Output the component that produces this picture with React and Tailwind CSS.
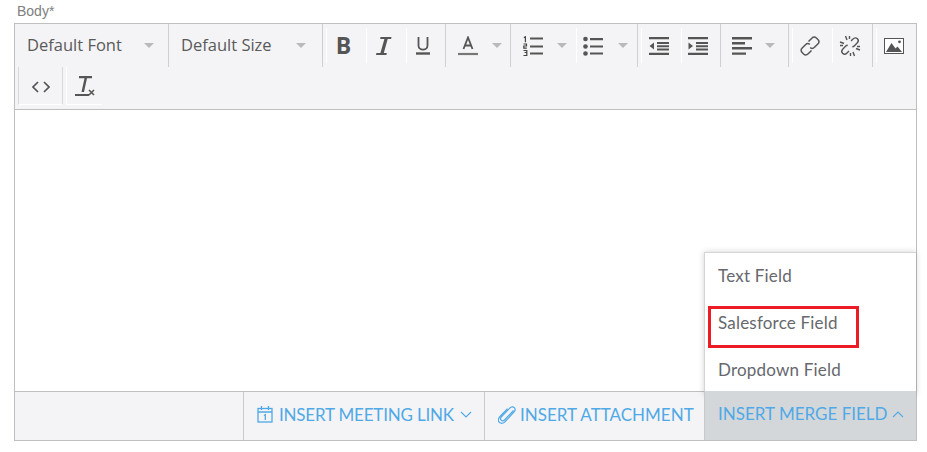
const Caret = () => <span className="ml-auto h-0 w-0 border-x-[5px] border-t-[5px] border-x-transparent border-t-[#b9b9bc]" />;

// toolbar icons, drawn on a 20x20 box
const Bold = () => <span className="font-['Open_Sans',sans-serif] text-[23px] font-bold leading-none text-[#555]">B</span>;
const Italic = () => (
  <svg width="16" height="20" viewBox="0 0 16 20" fill="#555">
    <path d="M4.500 1h11l-.4 2h-3.400L7.800 17h3l-.4 2H0l.4-2h4L8.400 3H4.200z" />
  </svg>
);
const Underline = () => (
  <svg width="14" height="20" viewBox="0 0 14 20" fill="none" stroke="#555">
    <path d="M2.500 1v8.500c0 5.500 9 5.500 9 0V1" strokeWidth="1.800" />
    <path d="M0 17.500h14" strokeWidth="2.400" />
  </svg>
);
const TextColor = () => (
  <svg width="20" height="20" viewBox="0 0 20 20" fill="none" stroke="#555">
    <path d="M5.500 13 10 1.500 14.500 13M7 9.500h6" strokeWidth="1.800" />
    <path d="M0 18h20" stroke="#777" strokeWidth="2.200" />
  </svg>
);
const Ordered = () => (
  <svg width="20" height="20" viewBox="0 0 20 20">
    <path d="M7 2.500h13M7 10.500h13M7 17.500h13" stroke="#555" strokeWidth="2.200" />
    <path d="M.8 1.500 2.400 .8v5.400M.5 8h3v2H.8v2.200h3M.5 14.500h3.300v2H1.500h2.300v3H.5" stroke="#444" fill="none" strokeWidth="1.200" />
  </svg>
);
const Bullets = () => (
  <svg width="20" height="20" viewBox="0 0 20 20" fill="#555">
    <circle cx="2.500" cy="3" r="2.300" />
    <circle cx="2.500" cy="10.500" r="2.300" />
    <circle cx="2.500" cy="17.500" r="2.300" />
    <path d="M7 2h13v2.200H7zM7 9.400h13v2.200H7zM7 16.400h13v2.200H7z" />
  </svg>
);
const Outdent = () => (
  <svg width="20" height="18" viewBox="0 0 20 18" fill="#555">
    <path d="M0 0h20v2.200H0zM8 5h12v2H8zM8 8.200h12v2H8zM8 11.400h12v2H8zM0 15.800h20V18H0zM5 5.500v7L.5 9z" />
  </svg>
);
const Indent = () => (
  <svg width="20" height="18" viewBox="0 0 20 18" fill="#555">
    <path d="M0 0h20v2.200H0zM8 5h12v2H8zM8 8.200h12v2H8zM8 11.400h12v2H8zM0 15.800h20V18H0zM.5 5.500v7L5 9z" />
  </svg>
);
const AlignLeft = () => (
  <svg width="20" height="18" viewBox="0 0 20 18" fill="#555">
    <path d="M0 0h20v2.400H0zM0 5h13v2.400H0zM0 10h20v2.400H0zM0 15.400h14v2.400H0z" />
  </svg>
);
const Link = () => (
  <svg width="20" height="20" viewBox="0 0 20 20" fill="none" stroke="#555" strokeWidth="1.500">
    <path d="M8.500 5.500 11.800 2.200c1.500-1.500 3.200-1.500 4.600-.2l1.500 1.500c1.400 1.400 1.300 3.100-.1 4.500L14.500 11.300c-1.400 1.400-3 1.400-4.300.2" />
    <path d="M11.500 14.500 8.200 17.800c-1.500 1.500-3.200 1.500-4.600.2l-1.500-1.500C.7 15.100.8 13.400 2.200 12L5.500 8.700c1.400-1.400 3-1.400 4.300-.2" />
  </svg>
);
const Unlink = () => (
  <svg width="22" height="22" viewBox="0 0 22 22" fill="none" stroke="#555" strokeWidth="1.400">
    <path d="M12 6l2-2c1.500-1.500 3.200-1.500 4.400-.3s1.200 2.900-.3 4.400l-2.600 2.600c-.8.800-1.500 1-2.200 1" />
    <path d="M10 16l-2 2c-1.500 1.500-3.200 1.500-4.400.3s-1.200-2.900.3-4.400l2.600-2.600c.8-.8 1.500-1 2.200-1" />
    <path d="M6.500 1l1.500 4M10.500 1v3M1 7l4 1.500M1 10.500h3M15.500 21L14 17M11.500 21v-3M21 15l-4-1.500M21 11.500h-3" />
  </svg>
);
const ImageIcon = () => (
  <svg width="20" height="16" viewBox="0 0 20 16">
    <rect x=".5" y=".5" width="19" height="15" fill="#fff" stroke="#555" />
    <path d="M2 14 7.500 5l4 5.500 2-2 4.500 5.500z" fill="#555" />
    <circle cx="15.500" cy="3.800" r="1.400" fill="#555" />
  </svg>
);
const Code = () => (
  <svg width="18" height="12" viewBox="0 0 18 12" fill="none" stroke="#555" strokeWidth="1.700">
    <path d="M6 1 1 6l5 5M12 1l5 5-5 5" />
  </svg>
);
const ClearFormat = () => (
  <svg width="20" height="22" viewBox="0 0 20 22" fill="#555">
    <path d="M4 1h13v2.200h-5L9 17H6.500L9.500 3.200H4z" />
    <path d="M0 19h14v2H0z" />
    <path d="m14 15 5 5M19 15l-5 5" stroke="#555" strokeWidth="1.600" />
  </svg>
);
const Calendar = () => (
  <svg width="16" height="17" viewBox="0 0 16 17" fill="none" stroke="#4fa9e6" strokeWidth="1.300">
    <rect x="1" y="2.500" width="14" height="13.500" />
    <path d="M1 6h14M4.500 0v4M11.500 0v4M7 9.500l1.300-.8V14" />
  </svg>
);
const Clip = () => (
  <svg width="18" height="19" viewBox="0 0 18 19" fill="none" stroke="#4fa9e6" strokeWidth="1.200">
    <path d="M15.500 5.500 6.500 15c-1 1-2.500 1-3.300.2s-.8-2.300.2-3.300l8.400-8.800c1.500-1.600 3.400-1.600 4.500-.5s1.100 3-.4 4.600L7.200 16.600c-2 2.100-4.400 2.100-5.800.7s-1.300-3.800.6-5.800L9.500 3.700" />
  </svg>
);
const Chevron = ({ up }) => (
  <svg width="12" height="7" viewBox="0 0 12 7" fill="none" stroke="#4fa9e6" strokeWidth="1.100">
    <path d={up ? 'M1 6l5-5 5 5' : 'M1 1l5 5 5-5'} />
  </svg>
);

// one formatting button with the white hairline on its left
const Btn = ({ children, className = 'w-10' }) => (
  <div className={`flex h-[35px] items-center justify-center border-l border-white pr-[6px] ${className}`}>{children}</div>
);

const Group = ({ children, last }) => (
  <div className={`flex h-[43px] items-start pl-[3px] pt-1 ${last ? '' : 'border-r border-[#cfcfd2]'}`}>{children}</div>
);

const Select = ({ label, className }) => (
  <div className={`flex h-[43px] w-[154px] items-center border-r border-[#cfcfd2] pl-3 text-[16.500px] text-[#5a5a5a] ${className}`}>
    {label}
    <Caret />
  </div>
);

export default function App() {
  return (
    <div className="h-[452px] w-[927px] bg-white px-[14px] font-['Open_Sans',sans-serif]">
      <div className="h-[23px] pl-[3px] pt-[3px] font-['Liberation_Sans',sans-serif] text-[14px] leading-[17px] text-[#808080]">Body*</div>
      <div className="flex h-[418px] w-[903px] flex-col border border-[#bfbfbf]">
        {/* toolbar */}
        <div className="flex h-[86px] flex-wrap content-start border-b border-[#bfbfbf] bg-[#f4f4f6]">
          <Select label="Default Font" className="pr-[14px]" />
          <Select label="Default Size" className="pr-[16px]" />
          <Group>
            <Btn><Bold /></Btn>
            <Btn><Italic /></Btn>
            <Btn className="w-[39px]"><Underline /></Btn>
          </Group>
          <Group>
            <div className="flex h-[35px] w-[61px] items-center pl-[9px] pr-[8px]"><TextColor /><Caret /></div>
          </Group>
          <Group>
            <div className="flex h-[35px] w-[62px] items-center pl-[9px] pr-[9px]"><Ordered /><Caret /></div>
            <div className="flex h-[35px] w-[61px] items-center border-l border-white pl-[6px] pr-[9px]"><Bullets /><Caret /></div>
          </Group>
          <Group>
            <Btn><Outdent /></Btn>
            <Btn className="w-[39px]"><Indent /></Btn>
          </Group>
          <Group>
            <div className="flex h-[35px] w-[64px] items-center pl-[8px] pr-[13px]"><AlignLeft /><Caret /></div>
          </Group>
          <Group>
            <Btn><Link /></Btn>
            <Btn><Unlink /></Btn>
          </Group>
          <Group last>
            <Btn className="w-[40px]"><ImageIcon /></Btn>
          </Group>
          <div className="flex h-[42px] pl-[3px]">
            <div className="flex h-[38px] w-[45px] items-center justify-center border-x border-b border-x-[#d9d9dc] border-b-white pt-[2px]"><Code /></div>
            <div className="ml-[3px] flex h-[38px] w-[36px] items-center border-b border-l border-white pl-2"><ClearFormat /></div>
          </div>
        </div>

        {/* editor area, the open menu hangs over it */}
        <div className="relative flex-1 bg-white">
          <div className="absolute bottom-[-4px] right-0 z-10 flex h-[143px] w-[212px] flex-col border-l border-t border-[#d5d5d5] bg-white pl-[13px] font-['Lato',sans-serif] text-[17px] tracking-[0.2px] text-[#66686d] shadow-[0_0_6px_rgba(0,0,0,0.18)]">
            <div className="flex h-[47px] items-center pb-px">Text Field</div>
            <div className="flex h-[47px] items-center pb-px">Salesforce Field</div>
            <div className="flex h-[47px] items-center pb-px">Dropdown Field</div>
            <div className="absolute left-[3px] top-[53px] h-[42px] w-[151px] border-[3px] border-[#ed1c24]" />
          </div>
        </div>

        {/* footer actions */}
        <div className="flex h-[49px] justify-end border-t border-[#bfbfbf] bg-[#f4f4f6] font-['Lato',sans-serif] text-[17px] text-[#4fa9e6]">
          <div className="flex w-[241px] items-center gap-[6px] border-l border-[#c9c9cc] pb-[3px] pl-[13px] tracking-[-0.2px]">
            <Calendar />
            INSERT MEETING LINK
            <Chevron />
          </div>
          <div className="flex w-[220px] items-center gap-1 border-l border-[#c9c9cc] pb-[3px] pl-[13px]">
            <Clip />
            INSERT ATTACHMENT
          </div>
          <div className="z-20 -mt-px flex w-[212px] items-center gap-[5px] border-l border-[#c9c9cc] bg-[#d4d7da] pb-[3px] pl-[13px]">
            INSERT MERGE FIELD
            <Chevron up />
          </div>
        </div>
      </div>
    </div>
  );
}
